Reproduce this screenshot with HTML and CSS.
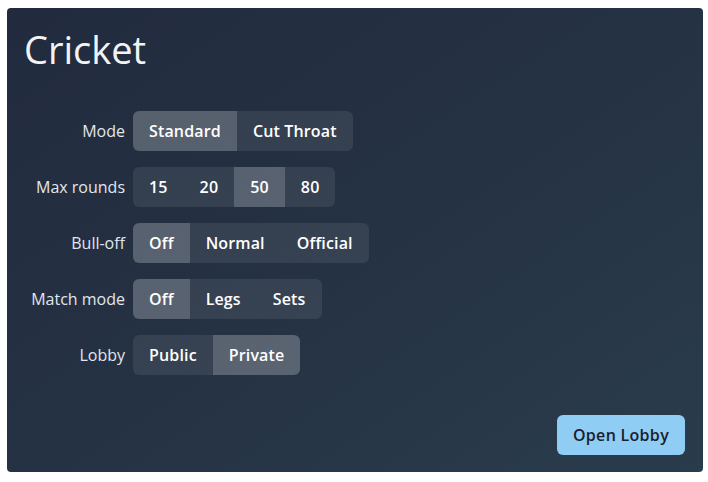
FILE: index.html
```html
<!DOCTYPE html>
<html lang="en">
<head>
<meta charset="utf-8">
<title>Cricket</title>
<link rel="stylesheet" href="styles.css">
</head>
<body>
<div class="card">
  <h1 class="title">Cricket</h1>
  <div class="form">
    <div class="label">Mode</div>
    <div class="group">
      <button class="btn active">Standard</button>
      <button class="btn">Cut Throat</button>
    </div>
    <div class="label">Max rounds</div>
    <div class="group">
      <button class="btn">15</button>
      <button class="btn">20</button>
      <button class="btn active">50</button>
      <button class="btn">80</button>
    </div>
    <div class="label">Bull-off</div>
    <div class="group">
      <button class="btn active">Off</button>
      <button class="btn">Normal</button>
      <button class="btn">Official</button>
    </div>
    <div class="label">Match mode</div>
    <div class="group">
      <button class="btn active">Off</button>
      <button class="btn">Legs</button>
      <button class="btn">Sets</button>
    </div>
    <div class="label">Lobby</div>
    <div class="group">
      <button class="btn">Public</button>
      <button class="btn active">Private</button>
    </div>
  </div>
  <div class="footer">
    <button class="primary">Open Lobby</button>
  </div>
</div>
</body>
</html>
```
FILE: styles.css
```css
html, body {
  margin: 0;
  padding: 0;
  background: #ffffff;
}
body {
  font-family: "Open Sans", "Noto Sans", sans-serif;
  padding: 8px 5px 10px 7px;
}
.card {
  box-sizing: border-box;
  width: 696px;
  height: 464px;
  border-radius: 4px;
  background: linear-gradient(to bottom right, #212b3d 0%, #253244 50%, #2a3c4c 100%);
  padding: 17px 18px 17px 17px;
  display: flex;
  flex-direction: column;
}
.title {
  margin: 1px 0 0 0;
  font-size: 38px;
  line-height: 46px;
  font-weight: 400;
  color: #f2f3f5;
}
.form {
  margin-top: 39px;
  display: grid;
  grid-template-columns: 101px max-content;
  column-gap: 8px;
  row-gap: 16px;
  align-items: center;
}
.label {
  text-align: right;
  font-size: 16px;
  color: #e2e6ec;
  white-space: nowrap;
}
.group {
  display: flex;
}
.btn {
  font-family: inherit;
  height: 40px;
  padding: 0 16px;
  border: 0;
  margin: 0;
  font-size: 16px;
  font-weight: 600;
  letter-spacing: 0.15px;
  color: #ffffff;
  background: rgba(255, 255, 255, 0.08);
  cursor: pointer;
}
.btn.active {
  background: rgba(255, 255, 255, 0.24);
}
.btn:first-child {
  border-radius: 6px 0 0 6px;
}
.btn:last-child {
  border-radius: 0 6px 6px 0;
}
.footer {
  margin-top: auto;
  display: flex;
  justify-content: flex-end;
}
.primary {
  font-family: inherit;
  height: 40px;
  padding: 0 16px;
  border: 0;
  border-radius: 6px;
  background: #90cdf4;
  color: #1a202c;
  font-size: 16px;
  font-weight: 600;
  letter-spacing: 0.3px;
}
```
